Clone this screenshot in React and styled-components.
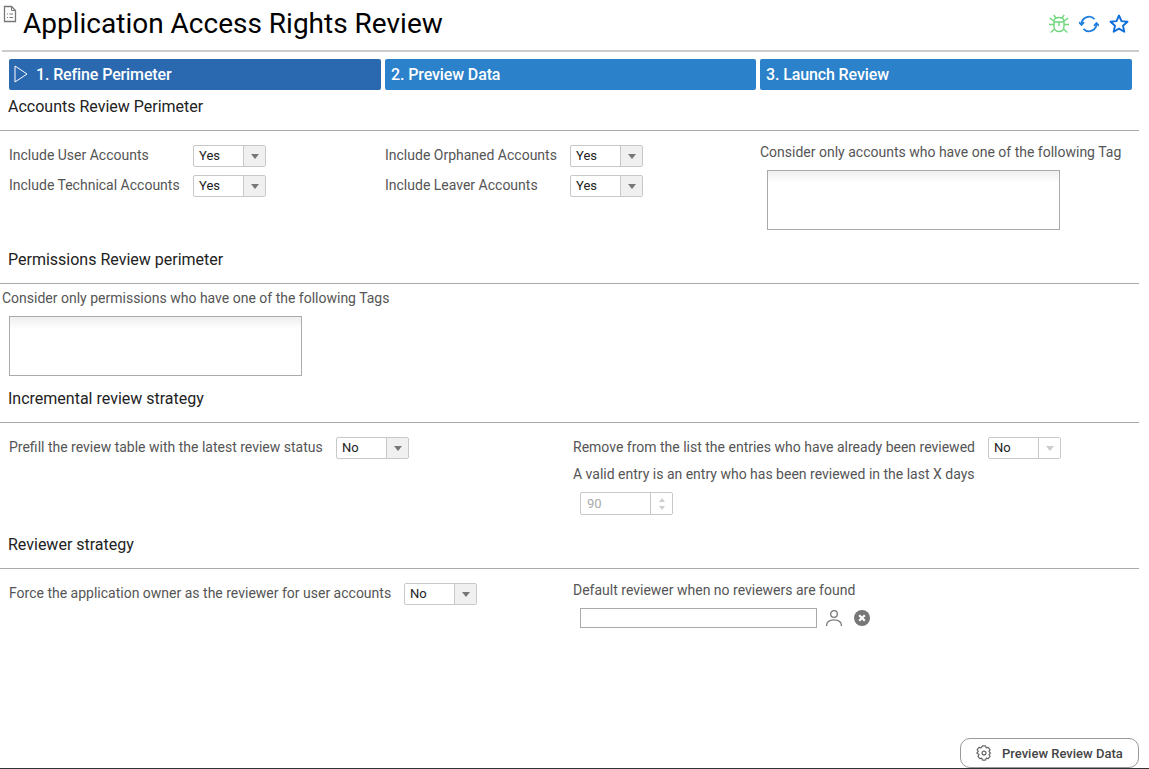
import React from 'react'
import styled, { createGlobalStyle } from 'styled-components'

const GlobalStyle = createGlobalStyle`
  html, body {
    margin: 0;
    padding: 0;
    background: #fff;
    font-family: Roboto, "Liberation Sans", sans-serif;
    overflow: hidden;
  }
`

const Page = styled.div`
  width: 1149px;
  height: 769px;
  display: flex;
  flex-direction: column;
  box-sizing: border-box;
`

const Header = styled.header`
  height: 52px;
  margin: 0 10px 0 2px;
  box-sizing: border-box;
  border-bottom: 2px solid #cccccc;
  display: flex;
  align-items: flex-start;
`

const PageIcon = styled.svg`
  width: 14px;
  height: 18px;
  margin: 5px 0 0 1px;
  flex: none;
`

const Title = styled.h1`
  margin: 7px 0 0 6px;
  font-size: 28px;
  line-height: 34px;
  font-weight: 400;
  color: #000;
  flex: 1;
`

const HeaderIcons = styled.div`
  display: flex;
  gap: 10px;
  margin: 14px 10px 0 0;
  svg {
    display: block;
    width: 20px;
    height: 20px;
  }
`

const Steps = styled.nav`
  display: grid;
  grid-template-columns: 372px 371px 372px;
  gap: 4px;
  margin: 7px 0 0 9px;
`

const Step = styled.div`
  height: 31px;
  border-radius: 2px;
  background: ${p => (p.$active ? '#2a69b0' : '#2b81ca')};
  color: #fff;
  font-size: 16px;
  font-weight: 500;
  letter-spacing: -0.12px;
  display: flex;
  align-items: center;
  padding-left: 6px;
  svg {
    width: 16px;
    height: 18px;
    margin: 0 7px 2px -2px;
  }
`

const SectionTitle = styled.h2`
  margin: 0 10px 0 0;
  padding: ${p => p.$pad || '8px'} 0 8px 8px;
  height: 24px;
  font-size: 16px;
  line-height: 18px;
  font-weight: 400;
  color: #222;
  border-bottom: 1px solid #aaaaaa;
`

const Columns = styled.section`
  display: grid;
  grid-template-columns: ${p => p.$cols};
  padding-left: 9px;
  height: ${p => p.$height};
  padding-top: 14px;
  box-sizing: border-box;
`

const Stack = styled.div`
  display: flex;
  flex-direction: column;
`

const Field = styled.div`
  display: flex;
  align-items: flex-start;
  height: 22px;
  margin-bottom: ${p => p.$after || '8px'};
`

const Label = styled.span`
  font-size: 14px;
  line-height: 20px;
  color: #555555;
  width: ${p => p.$width || 'auto'};
  flex: none;
`

const Select = styled.div`
  width: 73px;
  height: 22px;
  box-sizing: border-box;
  border: 1px solid #c8c8c8;
  border-radius: 2px;
  display: flex;
  background: #fff;
  font-size: 13px;
  color: #222;
`

const SelectValue = styled.span`
  flex: 1;
  padding-left: 5px;
  line-height: 20px;
`

const SelectArrow = styled.span`
  width: 21px;
  border-left: 1px solid #c8c8c8;
  background: ${p => (p.$disabled ? '#fff' : '#f0f0f0')};
  display: flex;
  align-items: center;
  justify-content: center;
  &::after {
    content: '';
    border-left: 4px solid transparent;
    border-right: 4px solid transparent;
    border-top: 5px solid ${p => (p.$disabled ? '#cccccc' : '#777777')};
  }
`

const TagBox = styled.div`
  width: 293px;
  height: 60px;
  box-sizing: border-box;
  border: 1px solid #aaaaaa;
  background: linear-gradient(#eeeeee, #ffffff 12px);
`

const TagColumn = styled(Stack)`
  margin-top: -3px;
  ${TagBox} {
    margin: 8px 0 0 7px;
  }
`

const PermissionsLabel = styled(Label)`
  display: block;
  margin: 4px 0 8px 2px;
`

const PermissionsBox = styled(TagBox)`
  margin-left: 9px;
`

const NumberInput = styled.div`
  width: 93px;
  height: 23px;
  box-sizing: border-box;
  margin: 8px 0 0 7px;
  border: 1px solid #c8c8c8;
  border-radius: 2px;
  display: flex;
  font-size: 13px;
  color: #aaaaaa;
`

const NumberValue = styled.span`
  flex: 1;
  padding-left: 6px;
  line-height: 21px;
`

const Spinner = styled.span`
  width: 21px;
  border-left: 1px solid #c8c8c8;
  display: flex;
  flex-direction: column;
  align-items: center;
  justify-content: center;
  gap: 4px;
`

const SpinArrow = styled.i`
  border-left: 3.5px solid transparent;
  border-right: 3.5px solid transparent;
  ${p => (p.$up ? 'border-bottom' : 'border-top')}: 4px solid #cfcfcf;
`

const ReviewerStack = styled(Stack)`
  margin-top: -3px;
`

const ReviewerRow = styled.div`
  display: flex;
  align-items: center;
  margin: 8px 0 0 7px;
`

const TextInput = styled.div`
  width: 237px;
  height: 20px;
  box-sizing: border-box;
  border: 1px solid #aaaaaa;
  margin-right: 8px;
`

const PersonIcon = styled.svg`
  width: 18px;
  height: 18px;
  margin-right: 11px;
`

const ClearIcon = styled.svg`
  width: 16px;
  height: 16px;
`

const Footer = styled.footer`
  margin-top: auto;
  height: 31px;
  box-sizing: border-box;
  border-bottom: 1px solid #333333;
  display: flex;
  justify-content: flex-end;
`

const PreviewButton = styled.button`
  width: 179px;
  height: 30px;
  margin: 0 10px 0 0;
  border: 1px solid #999999;
  border-radius: 10px;
  background: #fff;
  font-family: inherit;
  font-size: 13px;
  font-weight: 500;
  line-height: 30px;
  color: #444444;
  display: flex;
  align-items: center;
  padding: 1px 0 0 14px;
  gap: 9px;
  svg {
    width: 18px;
    height: 18px;
    margin-top: -1px;
  }
`

const YesNo = ({ value, disabled }) => (
  <Select>
    <SelectValue>{value}</SelectValue>
    <SelectArrow $disabled={disabled} />
  </Select>
)

const App = () => (
  <Page>
    <GlobalStyle />
    <Header>
      <PageIcon viewBox="0 0 14 18" fill="none" stroke="#777" strokeWidth="1.3">
        <path d="M1.5 1.5h7l4 4v11h-11z" />
        <path d="M8.5 1.5v4h4M4 9h1M6.5 9H10M4 12.5h1M6.5 12.5H10" strokeWidth="1" />
      </PageIcon>
      <Title>Application Access Rights Review</Title>
      <HeaderIcons>
        <svg viewBox="0 0 20 20" fill="none" stroke="#6fd67a" strokeWidth="1.4">
          <path d="M5 7.5C5 5 7.2 3.5 10 3.5s5 1.5 5 4v5c0 3-2.2 5-5 5s-5-2-5-5z" />
          <path d="M5 8h10M10 8v4M7 4.2 4.8 1M13 4.2 15.2 1M5 10.5H0M15 10.5h5M5 7 .8 4.2M15 7l4.2-2.8M5.6 15l-4 3.5M14.4 15l4 3.5" />
        </svg>
        <svg viewBox="0 0 20 20" fill="none" stroke="#1f7fe0" strokeWidth="1.8">
          <path d="M2.5 10.5A7.5 7.5 0 0 1 15.5 5.2" />
          <path d="M17.5 9.5A7.5 7.5 0 0 1 4.5 14.8" />
          <path d="M0 8.2l2.5 2.8L5 8.2M15 11.8l2.5-2.8 2.5 2.8" />
        </svg>
        <svg viewBox="0 0 20 20" fill="none" stroke="#0f6fdc" strokeWidth="1.9" strokeLinejoin="round">
          <path d="M10 1.5l2.5 5.6 6 .6-4.5 4 1.3 6L10 14.6l-5.3 3.1 1.3-6-4.5-4 6-.6z" />
        </svg>
      </HeaderIcons>
    </Header>

    <Steps>
      <Step $active>
        <svg viewBox="0 0 16 18" fill="none" stroke="#fff" strokeWidth="1">
          <path d="M2 1l12 8-12 8z" />
        </svg>
        1. Refine Perimeter
      </Step>
      <Step>2. Preview Data</Step>
      <Step>3. Launch Review</Step>
    </Steps>

    <SectionTitle>Accounts Review Perimeter</SectionTitle>
    <Columns $cols="376px 375px 1fr" $height="104px">
      <Stack>
        <Field>
          <Label $width="184px">Include User Accounts</Label>
          <YesNo value="Yes" />
        </Field>
        <Field>
          <Label $width="184px">Include Technical Accounts</Label>
          <YesNo value="Yes" />
        </Field>
      </Stack>
      <Stack>
        <Field>
          <Label $width="185px">Include Orphaned Accounts</Label>
          <YesNo value="Yes" />
        </Field>
        <Field>
          <Label $width="185px">Include Leaver Accounts</Label>
          <YesNo value="Yes" />
        </Field>
      </Stack>
      <TagColumn>
        <Label>Consider only accounts who have one of the following Tag</Label>
        <TagBox />
      </TagColumn>
    </Columns>

    <SectionTitle $pad="16px">Permissions Review perimeter</SectionTitle>
    <PermissionsLabel as="div">Consider only permissions who have one of the following Tags</PermissionsLabel>
    <PermissionsBox />

    <SectionTitle $pad="14px">Incremental review strategy</SectionTitle>
    <Columns $cols="564px 1fr" $height="100px">
      <Field>
        <Label $width="327px">Prefill the review table with the latest review status</Label>
        <YesNo value="No" />
      </Field>
      <Stack>
        <Field $after="5px">
          <Label $width="415px">Remove from the list the entries who have already been reviewed</Label>
          <YesNo value="No" disabled />
        </Field>
        <Label>A valid entry is an entry who has been reviewed in the last X days</Label>
        <NumberInput>
          <NumberValue>90</NumberValue>
          <Spinner>
            <SpinArrow $up />
            <SpinArrow />
          </Spinner>
        </NumberInput>
      </Stack>
    </Columns>

    <SectionTitle $pad="13px">Reviewer strategy</SectionTitle>
    <Columns $cols="564px 1fr" $height="70px">
      <Field>
        <Label $width="395px">Force the application owner as the reviewer for user accounts</Label>
        <YesNo value="No" />
      </Field>
      <ReviewerStack>
        <Label>Default reviewer when no reviewers are found</Label>
        <ReviewerRow>
          <TextInput />
          <PersonIcon viewBox="0 0 18 18" fill="none" stroke="#777" strokeWidth="1.3">
            <circle cx="9" cy="5" r="3.3" />
            <path d="M1.5 17c0-4.2 3.2-6.2 7.5-6.2s7.5 2 7.5 6.2" />
          </PersonIcon>
          <ClearIcon viewBox="0 0 16 16">
            <circle cx="8" cy="8" r="8" fill="#777" />
            <path d="M5.2 5.2l5.6 5.6M10.8 5.2l-5.6 5.6" stroke="#fff" strokeWidth="2.2" />
          </ClearIcon>
        </ReviewerRow>
      </ReviewerStack>
    </Columns>

    <Footer>
      <PreviewButton>
        <svg viewBox="0 0 24 24" fill="none" stroke="#666" strokeWidth="1.6" strokeLinejoin="round">
          <path d="M10 2.5h4l1 2.6 2.6-.6 2.5 3-1.4 2.4 1.8 2.1-1.8 2.1 1.4 2.4-2.5 3-2.6-.6-1 2.6h-4l-1-2.6-2.6.6-2.5-3 1.4-2.4L2.5 12l1.8-2.1-1.4-2.4 2.5-3 2.6.6z" />
          <circle cx="12" cy="12" r="2.6" />
        </svg>
        Preview Review Data
      </PreviewButton>
    </Footer>
  </Page>
)

export default App
